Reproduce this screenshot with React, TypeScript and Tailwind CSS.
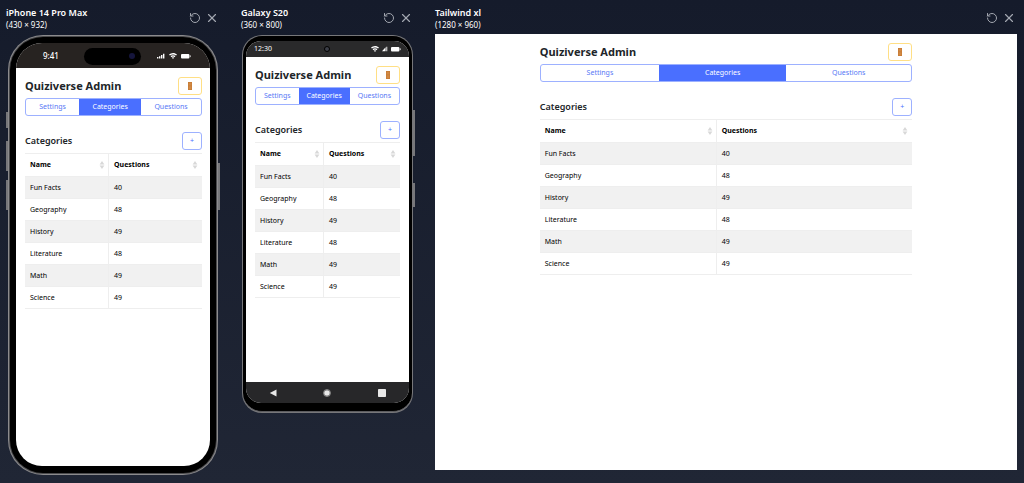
import type { ReactNode } from "react";
import { RotateCcw, X } from "lucide-react";
import clsx from "clsx";

const TABS = ["Settings", "Categories", "Questions"];
const ACTIVE_TAB = "Categories";

const CATEGORIES = [
  { name: "Fun Facts", questions: 40 },
  { name: "Geography", questions: 48 },
  { name: "History", questions: 49 },
  { name: "Literature", questions: 48 },
  { name: "Math", questions: 49 },
  { name: "Science", questions: 49 },
];

function SortIcon() {
  return (
    <svg viewBox="0 0 6 8" className="w-1.5 h-2 fill-[#d8d8d8]" aria-hidden="true">
      <path d="M3 0 5.4 3.6H.6ZM3 8 .6 4.4h4.8Z" />
    </svg>
  );
}

function DoorIcon() {
  return (
    <svg viewBox="0 0 6 8" className="w-1.5 h-2" aria-hidden="true">
      <path d="M1 0h4v8H1Z" fill="#c67a35" />
      <path d="M1.600.8h2.800v2.600H1.600ZM1.600 4.200h2.800v3H1.600Z" fill="#d18a45" />
    </svg>
  );
}

function QuizAdmin() {
  return (
    <div className="pt-[9px] text-[7px] leading-[10px] text-[#212529] font-['Noto_Sans',sans-serif]">
      <header className="flex items-center justify-between h-[18px]">
        <h1 className="text-[11px] leading-[18px] font-bold whitespace-nowrap">
          Quiziverse Admin
        </h1>
        <button
          type="button"
          aria-label="Log out"
          className="flex items-center justify-center w-6 h-[18px] border border-[#ffdf85] rounded-[3px]"
        >
          <DoorIcon />
        </button>
      </header>

      <nav className="flex mt-[3px] h-[18px] border border-[#9db1ff] rounded-[3px] overflow-hidden">
        {TABS.map((tab) => (
          <button
            key={tab}
            type="button"
            className={clsx(
              "flex-auto text-center",
              tab === ACTIVE_TAB ? "bg-[#4a6fff] text-white" : "text-[#5878f5]",
            )}
          >
            {tab}
          </button>
        ))}
      </nav>

      <section className="mt-4">
        <div className="flex items-center justify-between h-[18px]">
          <h2 className="text-[9px] leading-[18px] font-semibold">{ACTIVE_TAB}</h2>
          <button
            type="button"
            aria-label="Add category"
            className="flex items-center justify-center w-5 h-[18px] border border-[#9db1ff] rounded-[3px] text-[#4a6fff]"
          >
            +
          </button>
        </div>

        <table className="w-full mt-[3px] table-fixed border-separate border-spacing-0 text-black">
          <thead>
            <tr className="h-6 text-left">
              <th className="w-[47.5%] pl-[5px] pr-[3px] border-y border-r border-[#eeeeee]">
                <div className="flex items-center justify-between">
                  Name
                  <SortIcon />
                </div>
              </th>
              <th className="pl-[5px] pr-1 border-y border-[#eeeeee]">
                <div className="flex items-center justify-between">
                  Questions
                  <SortIcon />
                </div>
              </th>
            </tr>
          </thead>
          <tbody>
            {CATEGORIES.map((category) => (
              <tr key={category.name} className="h-[22px] odd:bg-[#f1f1f1]">
                <td className="px-[5px] border-b border-r border-[#eeeeee]">
                  {category.name}
                </td>
                <td className="px-[5px] border-b border-[#eeeeee]">
                  {category.questions}
                </td>
              </tr>
            ))}
          </tbody>
        </table>
      </section>
    </div>
  );
}

interface PreviewProps {
  title: string;
  size: string;
  className?: string;
  children: ReactNode;
}

function Preview({ title, size, className, children }: PreviewProps) {
  return (
    <section className={clsx("flex flex-col", className)}>
      <header className="flex items-center justify-between h-[34px] pt-0.5 pr-px shrink-0 text-white">
        <div>
          <h2 className="text-[9px] leading-[12px] font-semibold">{title}</h2>
          <p className="text-[8px] leading-[11px]">{size}</p>
        </div>
        <div className="flex items-center gap-1 text-[#a3a7b0]">
          <button type="button" aria-label={`Reload ${title}`}>
            <RotateCcw className="size-3" strokeWidth={2} />
          </button>
          <button type="button" aria-label={`Close ${title}`}>
            <X className="size-3.5" strokeWidth={2} />
          </button>
        </div>
      </header>
      {children}
    </section>
  );
}

function WifiIcon() {
  return (
    <svg viewBox="0 0 16 12" className="w-2 h-1.5" fill="currentColor" aria-hidden="true">
      <path d="M8 0c3 0 5.800 1.200 8 3.200l-1.800 2A9 9 0 0 0 8 2.800a9 9 0 0 0-6.200 2.400L0 3.200A12 12 0 0 1 8 0Zm0 4.300c1.900 0 3.600.7 4.900 1.900L11 8.300A4.500 4.500 0 0 0 8 7.100c-1.100 0-2.200.5-3 1.200L3.100 6.200A7.200 7.200 0 0 1 8 4.300Zm0 4.200c.8 0 1.500.3 2 .8l-2 2.500-2-2.500c.5-.5 1.200-.8 2-.8Z" />
    </svg>
  );
}

function BatteryIcon() {
  return (
    <svg viewBox="0 0 10 6" className="w-2.5 h-1.5" fill="currentColor" aria-hidden="true">
      <rect x="0" y="1" width="8.400" height="4.400" rx="1" />
      <rect x="8.800" y="2.200" width=".8" height="2" rx=".4" />
    </svg>
  );
}

function IPhone() {
  return (
    <div className="relative mx-0.5 mt-px p-px rounded-[35px] bg-[#8c8b8d]">
      <span className="absolute -left-0.5 top-[77px] w-0.5 h-4 bg-[#77777a]" />
      <span className="absolute -left-0.5 top-[106px] w-0.5 h-[30px] bg-[#77777a]" />
      <span className="absolute -left-0.5 top-[145px] w-0.5 h-[30px] bg-[#77777a]" />
      <span className="absolute -right-0.5 top-[128px] w-0.5 h-[47px] bg-[#77777a]" />
      <div className="p-px rounded-[34px] bg-[#4a4a4c]">
        <div className="px-[6px] pt-[6px] pb-[7px] rounded-[33px] bg-black">
          <div className="flex flex-col min-h-[423px] rounded-[26px] overflow-hidden bg-white">
            <div className="grid grid-cols-3 items-center h-[25px] pt-px shrink-0 bg-[#272321] text-white">
              <span className="pl-[27px] text-[8px] leading-[10px] font-medium">9:41</span>
              <div className="flex items-center justify-end w-[57px] h-[17px] pr-1.5 justify-self-center rounded-full bg-black">
                <span className="size-1.5 rounded-full bg-[#15153c]" />
              </div>
              <div className="flex items-center justify-center gap-1 pr-2">
                <svg viewBox="0 0 8 6" className="w-2 h-1.5" fill="currentColor" aria-hidden="true">
                  <path d="M0 4h1.400v1.600H0ZM2 3.200h1.400v2.400H2ZM4 2h1.400v3.600H4ZM6 .8h1.400v4.800H6Z" />
                </svg>
                <WifiIcon />
                <BatteryIcon />
              </div>
            </div>
            <div className="pl-[9px] pr-2">
              <QuizAdmin />
            </div>
          </div>
        </div>
      </div>
    </div>
  );
}

function Galaxy() {
  return (
    <div className="relative mx-px mt-px p-px rounded-[20px] bg-[#77777a]">
      <span className="absolute -right-0.5 top-[75px] w-0.5 h-[46px] bg-[#77777a]" />
      <span className="absolute -right-0.5 top-[148px] w-0.5 h-6 bg-[#77777a]" />
      <div className="px-[3px] pt-[5px] pb-2 rounded-[19px] border-b border-[#5b5b5e] bg-black">
        <div className="flex flex-col min-h-[362px] rounded-[15px] overflow-hidden bg-white">
          <div className="grid grid-cols-3 items-center h-4 shrink-0 bg-[#2a2a2b] text-white">
            <span className="pl-2 text-[7px] leading-[10px]">12:30</span>
            <span className="size-1.5 justify-self-center rounded-full border border-black bg-[#3c3f48]" />
            <div className="flex items-center justify-end gap-[3px] pr-2">
              <WifiIcon />
              <svg viewBox="0 0 8 6" className="w-1.5 h-1.5" fill="currentColor" aria-hidden="true">
                <path d="M0 6 4.800.8V6ZM5.800 0H7v6H5.800Z" />
              </svg>
              <BatteryIcon />
            </div>
          </div>
          <div className="grow px-[9px]">
            <QuizAdmin />
          </div>
          <div className="flex items-center justify-around h-[21px] shrink-0 bg-[#272729] text-[#e8e8e8]">
            <svg viewBox="0 0 8 8" className="size-2" fill="currentColor" aria-hidden="true">
              <path d="M7.500.4v7.200L.8 4Z" />
            </svg>
            <svg viewBox="0 0 8 8" className="size-2" aria-hidden="true">
              <circle cx="4" cy="4" r="3.500" fill="none" stroke="#a0a0a0" strokeWidth=".8" />
              <circle cx="4" cy="4" r="2.800" fill="currentColor" />
            </svg>
            <svg viewBox="0 0 8 8" className="size-2" fill="currentColor" aria-hidden="true">
              <rect width="8" height="8" rx=".8" />
            </svg>
          </div>
        </div>
      </div>
    </div>
  );
}

export default function App() {
  return (
    <main className="flex gap-[21px] min-h-screen pl-1.5 pr-[7px] pb-2 bg-linear-to-b from-[#151b2b] to-[#202635] font-['Noto_Sans',sans-serif]">
      <Preview title="iPhone 14 Pro Max" size="(430 × 932)" className="w-[214px] shrink-0 self-start">
        <IPhone />
      </Preview>
      <Preview title="Galaxy S20" size="(360 × 800)" className="w-[173px] shrink-0 self-start">
        <Galaxy />
      </Preview>
      <Preview title="Tailwind xl" size="(1280 × 960)" className="grow mb-[5px]">
        <div className="grow bg-white">
          <div className="w-[64%] mx-auto">
            <QuizAdmin />
          </div>
        </div>
      </Preview>
    </main>
  );
}
